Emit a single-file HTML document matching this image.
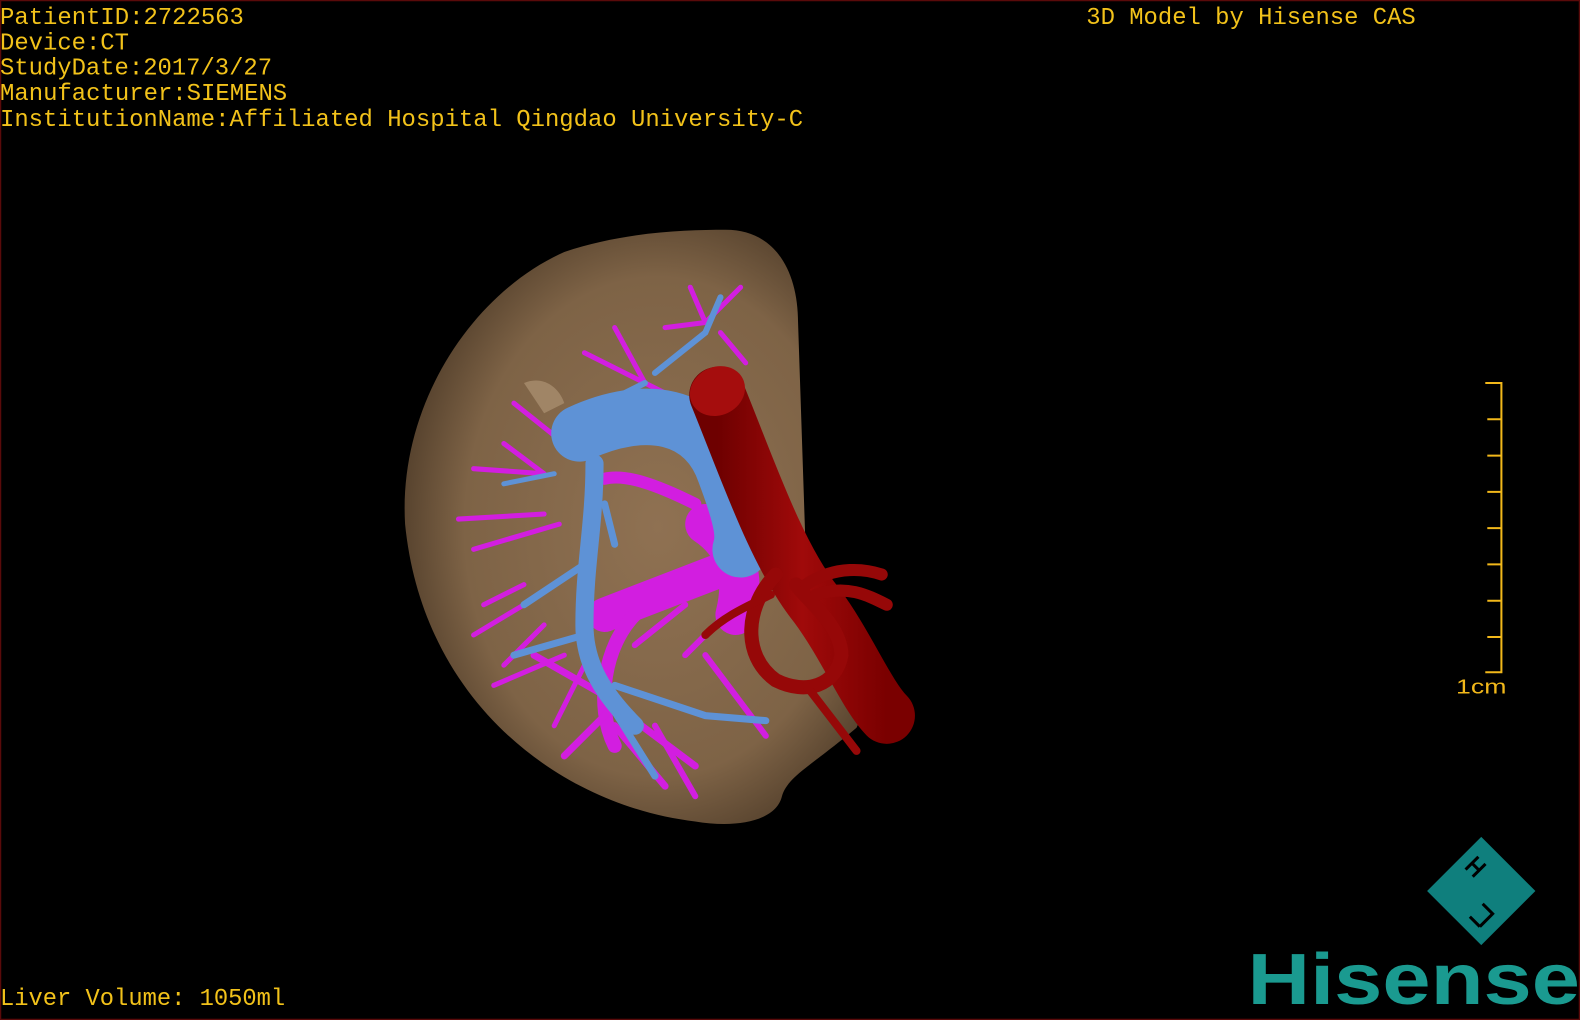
<!DOCTYPE html>
<html><head><meta charset="utf-8"><style>
html,body{margin:0;padding:0;background:#000;width:1580px;height:1020px;overflow:hidden}
svg{display:block}
text.y{font-family:"Liberation Mono","DejaVu Sans Mono",monospace;fill:#f2c21a}
</style></head><body>
<svg width="1580" height="1020" viewBox="0 0 1568 1012" preserveAspectRatio="none" xmlns="http://www.w3.org/2000/svg">
<defs>
<radialGradient id="lv" cx="0.55" cy="0.5" r="0.6">
<stop offset="0" stop-color="#8f7152"/><stop offset="0.7" stop-color="#7e6346"/><stop offset="1" stop-color="#4a3826"/>
</radialGradient>
<linearGradient id="ao" x1="0" y1="0" x2="1" y2="0">
<stop offset="0" stop-color="#6e0000"/><stop offset="0.5" stop-color="#a00a0a"/><stop offset="1" stop-color="#7a0000"/>
</linearGradient>
</defs>
<rect x="0" y="0" width="1568" height="1012" fill="#000"/>
<rect x="0.5" y="0.5" width="1567" height="1011" fill="none" stroke="#5a0a0a" stroke-width="1.5"/>

<text class="y" x="0" y="24" font-size="24" textLength="242" lengthAdjust="spacingAndGlyphs">PatientID:2722563</text>
<text class="y" x="0" y="49" font-size="24" textLength="128" lengthAdjust="spacingAndGlyphs">Device:CT</text>
<text class="y" x="0" y="74" font-size="24" textLength="270" lengthAdjust="spacingAndGlyphs">StudyDate:2017/3/27</text>
<text class="y" x="0" y="99" font-size="24" textLength="285" lengthAdjust="spacingAndGlyphs">Manufacturer:SIEMENS</text>
<text class="y" x="0" y="125" font-size="24" textLength="797" lengthAdjust="spacingAndGlyphs">InstitutionName:Affiliated Hospital Qingdao University-C</text>
<text class="y" x="1078" y="24" font-size="24" textLength="327" lengthAdjust="spacingAndGlyphs">3D Model by Hisense CAS</text>
<text class="y" x="0" y="997" font-size="24" textLength="283" lengthAdjust="spacingAndGlyphs">Liver Volume: 1050ml</text>

<!-- scale bar -->
<g stroke="#f2b81a" stroke-width="2" fill="none">
<path d="M1474 380 H1490 V667 H1474"/>
<path d="M1476 416H1490M1476 452H1490M1476 488H1490M1476 524H1490M1476 560H1490M1476 596H1490M1476 632H1490"/>
</g>
<text x="1445" y="688" font-size="20" style="font-family:'Liberation Sans',sans-serif;fill:#f2b81a" textLength="50" lengthAdjust="spacingAndGlyphs">1cm</text>

<!-- logo -->
<g transform="translate(1470,884) rotate(45)">
<rect x="-38" y="-38" width="76" height="76" fill="#0f7f7d"/>
<g stroke="#000" stroke-width="3" fill="none">
<path d="M-26 -22 V-4 M-16 -22 V-4 M-26 -13 H-16"/>
<path d="M10 8 H24 V26 M10 26 H24"/>
</g>
</g>
<text x="1238" y="996" font-size="72" font-weight="bold" style="font-family:'Liberation Sans',sans-serif;fill:#1a9a90" textLength="330" lengthAdjust="spacingAndGlyphs">Hisense</text>

<!-- liver -->
<path d="M720 228 C770 228 792 270 792 320 L800 560 C850 600 872 680 850 722 C805 760 782 770 776 790 C770 815 730 822 690 815 C560 800 420 700 402 520 C395 400 470 290 560 250 C620 230 680 228 720 228 Z" fill="url(#lv)"/>
<path d="M520 380 C540 372 555 385 560 400 L540 410 Z" fill="#a08566"/>

<!-- purple branches -->
<g stroke="#d21ee0" stroke-linecap="round" fill="none">
<path d="M600 610 L730 560" stroke-width="34"/>
<path d="M700 520 C730 540 740 570 730 610" stroke-width="40"/>
<path d="M690 500 C650 480 620 470 600 475" stroke-width="12"/>
<path d="M630 610 C600 640 590 700 610 740" stroke-width="14"/>
<path d="M610 700 L560 750 M610 720 L660 780 M610 700 L690 760 M600 690 L530 650" stroke-width="7"/>
<path d="M540 470 L470 465 M540 470 L500 440 M560 440 L510 400 M540 510 L455 515 M555 520 L470 545 M520 580 L480 600 M520 600 L470 630 M540 620 L500 660 M560 650 L490 680 M580 660 L550 720" stroke-width="5"/>
<path d="M640 380 L580 350 M640 380 L610 325 M640 380 L670 395 M700 320 L685 285 M700 320 L735 285 M700 320 L660 325 M715 330 L740 360" stroke-width="5"/>
<path d="M680 600 L630 640 M720 610 L680 650 M700 650 L760 730 M650 720 L690 790" stroke-width="6"/>
</g>

<!-- blue vessels -->
<g stroke="#5e92d6" stroke-linecap="round" fill="none">
<path d="M575 430 C640 400 700 410 720 470 C735 510 740 530 735 545" stroke-width="56"/>
<path d="M590 460 C590 520 580 560 580 620 C580 660 600 690 630 720" stroke-width="18"/>
<path d="M580 630 L510 650 M580 560 L520 600 M600 500 L610 540 M610 680 L700 710 L760 715 M600 690 L650 770" stroke-width="7"/>
<path d="M650 370 L700 330 L715 295 M640 380 L600 400" stroke-width="6"/>
<path d="M550 470 L500 480" stroke-width="5"/>
</g>

<!-- red arteries -->
<g stroke="#960808" stroke-linecap="round" fill="none">
<path d="M712 392 C740 460 770 550 810 600 C840 640 860 690 880 710" stroke="url(#ao)" stroke-width="56"/>
<path d="M770 570 C740 600 735 650 770 675 C800 690 830 680 835 650 C835 620 800 595 790 580" stroke-width="14"/>
<path d="M800 580 C830 560 860 565 875 570 M810 590 C840 580 860 590 880 600" stroke-width="12"/>
<path d="M765 590 C745 600 720 610 700 630 M800 680 L850 745" stroke-width="8"/>
</g>
<ellipse cx="712" cy="388" rx="28" ry="24" fill="#a50d0d" transform="rotate(-25 712 388)"/>
</svg>
</body></html>
